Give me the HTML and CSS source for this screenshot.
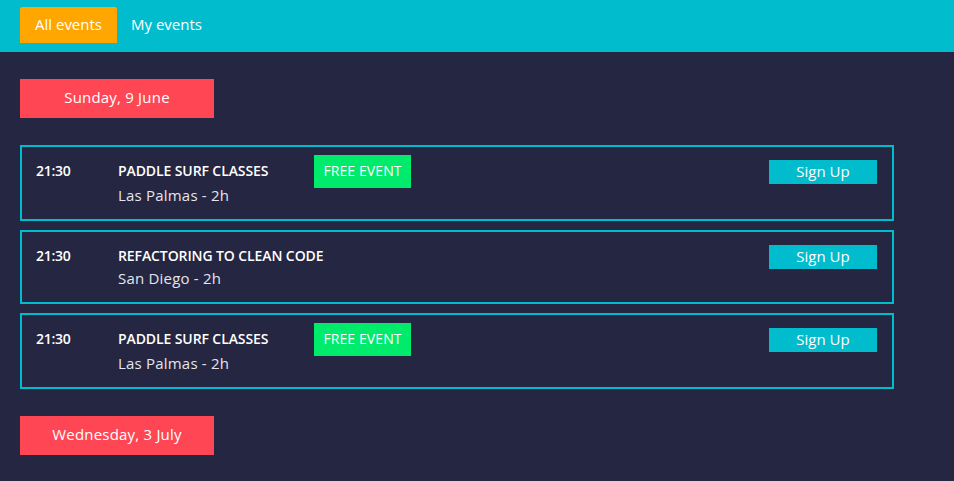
FILE: index.html
```html
<!DOCTYPE html>
<html lang="en">
<head>
<meta charset="utf-8">
<title>Events</title>
<link rel="stylesheet" href="styles.css">
</head>
<body>
<header class="topbar">
  <nav class="tabs">
    <a class="tab tab-active" href="#">All events</a>
    <a class="tab" href="#">My events</a>
  </nav>
</header>
<main class="content">
  <section class="day">
    <div class="day-label">Sunday, 9 June</div>
    <ul class="event-list">
      <li class="event">
        <div class="event-time">21:30</div>
        <div class="event-info">
          <div class="event-head">
            <span class="event-title">PADDLE SURF CLASSES</span>
            <span class="badge">FREE EVENT</span>
          </div>
          <div class="event-meta">Las Palmas - 2h</div>
        </div>
        <button class="signup">Sign Up</button>
      </li>
      <li class="event">
        <div class="event-time">21:30</div>
        <div class="event-info">
          <div class="event-head">
            <span class="event-title">REFACTORING TO CLEAN CODE</span>
          </div>
          <div class="event-meta">San Diego - 2h</div>
        </div>
        <button class="signup">Sign Up</button>
      </li>
      <li class="event">
        <div class="event-time">21:30</div>
        <div class="event-info">
          <div class="event-head">
            <span class="event-title">PADDLE SURF CLASSES</span>
            <span class="badge">FREE EVENT</span>
          </div>
          <div class="event-meta">Las Palmas - 2h</div>
        </div>
        <button class="signup">Sign Up</button>
      </li>
    </ul>
  </section>
  <section class="day">
    <div class="day-label">Wednesday, 3 July</div>
  </section>
</main>
</body>
</html>
```
FILE: styles.css
```css
* { box-sizing: border-box; }
html, body { margin: 0; padding: 0; }
body {
  background: #252641;
  font-family: "Open Sans", "Liberation Sans", sans-serif;
  color: #ffffff;
  height: 481px;
  overflow: hidden;
}
.topbar {
  background: #00bccd;
  height: 52px;
  padding: 7px 20px 0;
}
.tabs {
  display: flex;
}
.tab {
  display: block;
  height: 36px;
  line-height: 35px;
  padding: 0 14px;
  font-size: 15px;
  color: #ffffff;
  text-decoration: none;
  border-radius: 2px 2px 0 0;
}
.tab-active {
  background: #ffa600;
  padding: 0 15px;
}
.content {
  padding: 27px 60px 0 20px;
}
.day {
  margin-bottom: 27px;
}
.day-label {
  width: 194px;
  height: 39px;
  line-height: 37px;
  background: #ff4654;
  text-align: center;
  font-size: 15px;
  letter-spacing: 0.2px;
  color: #ffffff;
}
.event-list {
  list-style: none;
  margin: 27px 0 0;
  padding: 0;
  display: flex;
  flex-direction: column;
  gap: 9px;
}
.event {
  display: flex;
  align-items: flex-start;
  border: 2px solid #00bccd;
  padding: 13px 15px 13px 14px;
}
.event-time {
  width: 82px;
  flex: 0 0 82px;
  font-size: 14px;
  font-weight: 600;
  line-height: 22px;
  letter-spacing: -0.3px;
}
.event-info {
  flex: 1;
}
.event-head {
  display: flex;
  align-items: flex-start;
}
.event-title {
  flex: 0 0 196px;
  white-space: nowrap;
  font-size: 14px;
  font-weight: 600;
  line-height: 22px;
  letter-spacing: -0.1px;
}
.badge {
  display: block;
  background: #00ea6c;
  color: #ffffff;
  font-size: 14px;
  line-height: 32px;
  height: 33px;
  width: 97px;
  text-align: center;
  letter-spacing: 0.1px;
  margin: -5px 0 -4px;
}
.event-meta {
  font-size: 15px;
  line-height: 22px;
  letter-spacing: 0.2px;
  color: #e4e4ec;
}
.signup {
  width: 108px;
  height: 24px;
  border: 0;
  background: #00bccd;
  color: #ffffff;
  font-family: inherit;
  font-size: 15px;
  line-height: 20px;
  padding: 0 0 3px;
  margin: 0;
}
```
